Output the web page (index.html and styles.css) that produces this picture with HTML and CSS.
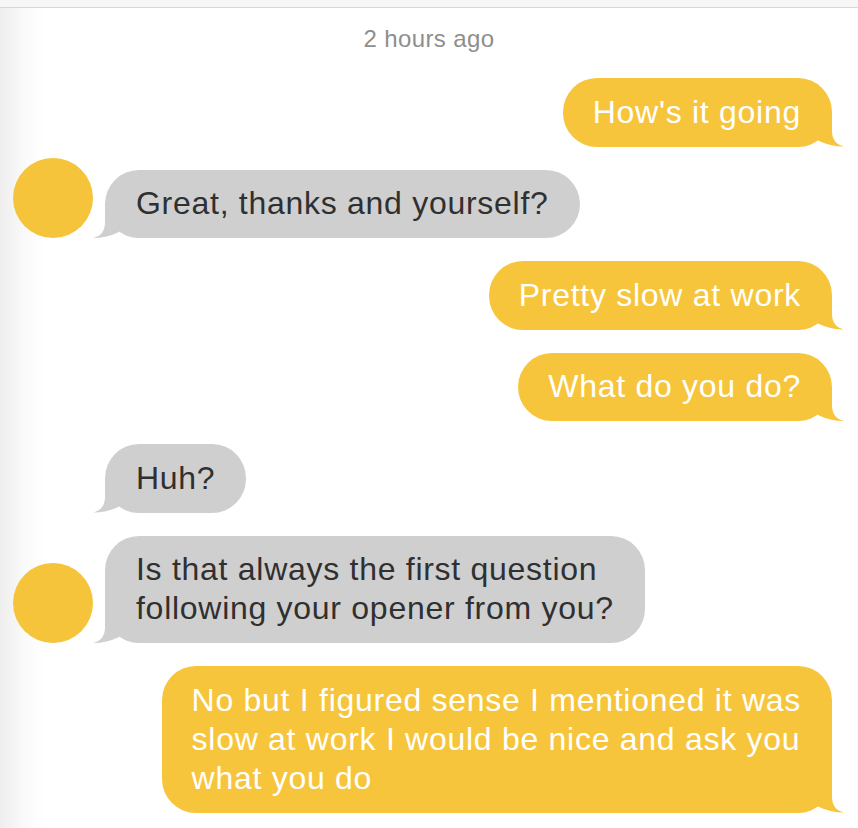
FILE: index.html
```html
<!DOCTYPE html>
<html>
<head>
<meta charset="utf-8">
<link rel="stylesheet" href="styles.css">
</head>
<body>
<div class="topbar"></div>
<div class="time">2 hours ago</div>
<div class="thread">
  <div class="row me"><div class="bubble">How's it going</div></div>
  <div class="row them"><div class="avatar"></div><div class="bubble">Great, thanks and yourself?</div></div>
  <div class="row me"><div class="bubble">Pretty slow at work</div></div>
  <div class="row me"><div class="bubble">What do you do?</div></div>
  <div class="row them"><div class="avatar empty"></div><div class="bubble">Huh?</div></div>
  <div class="row them"><div class="avatar"></div><div class="bubble">Is that always the first question<br>following your opener from you?</div></div>
  <div class="row me"><div class="bubble">No but I figured sense I mentioned it was<br>slow at work I would be nice and ask you<br>what you do</div></div>
</div>
</body>
</html>
```
FILE: styles.css
```css
html, body {
  margin: 0;
  padding: 0;
}
body {
  width: 858px;
  height: 828px;
  overflow: hidden;
  background: linear-gradient(90deg, #eeeeee 0, #fafafa 25px, #ffffff 45px);
  font-family: "Liberation Sans", Arial, sans-serif;
}
.topbar {
  height: 7px;
  background: #f6f6f6;
  border-bottom: 1px solid #d8d8d8;
}
.time {
  margin-top: 17px;
  height: 28px;
  line-height: 28px;
  font-size: 24px;
  letter-spacing: 0.4px;
  color: #8e8e8e;
  text-align: center;
}
.thread {
  margin-top: 25px;
  display: flex;
  flex-direction: column;
  gap: 23px;
}
.row {
  display: flex;
  align-items: flex-end;
}
.row.me {
  justify-content: flex-end;
  padding-right: 26px;
}
.row.them {
  padding-left: 13px;
  gap: 12px;
}
.avatar {
  flex: none;
  width: 80px;
  height: 80px;
  margin-top: -12px;
  border-radius: 50%;
  background: #f6c43a;
}
.avatar.empty {
  height: 0;
  margin-top: 0;
  visibility: hidden;
}
.bubble {
  position: relative;
  white-space: nowrap;
  font-size: 32px;
  letter-spacing: 0.72px;
  line-height: 39px;
  padding: 14.75px 31px 14.75px 30px;
  border-radius: 34px;
}
.me .bubble {
  background: #f7c53b;
  color: #ffffff;
}
.them .bubble {
  background: #cfcfcf;
  color: #303030;
  padding: 14.75px 31px 14.75px 31px;
}
.bubble::after {
  content: "";
  position: absolute;
  bottom: 0;
  width: 48px;
  height: 40px;
  background: inherit;
  clip-path: path('M34 6 L34 24 C34 33 38 38 46 40 Q32 40 20 34 L19 6 Z');
}
.me .bubble::after {
  right: -14px;
}
.them .bubble::after {
  left: -14px;
  transform: scaleX(-1);
}
```
